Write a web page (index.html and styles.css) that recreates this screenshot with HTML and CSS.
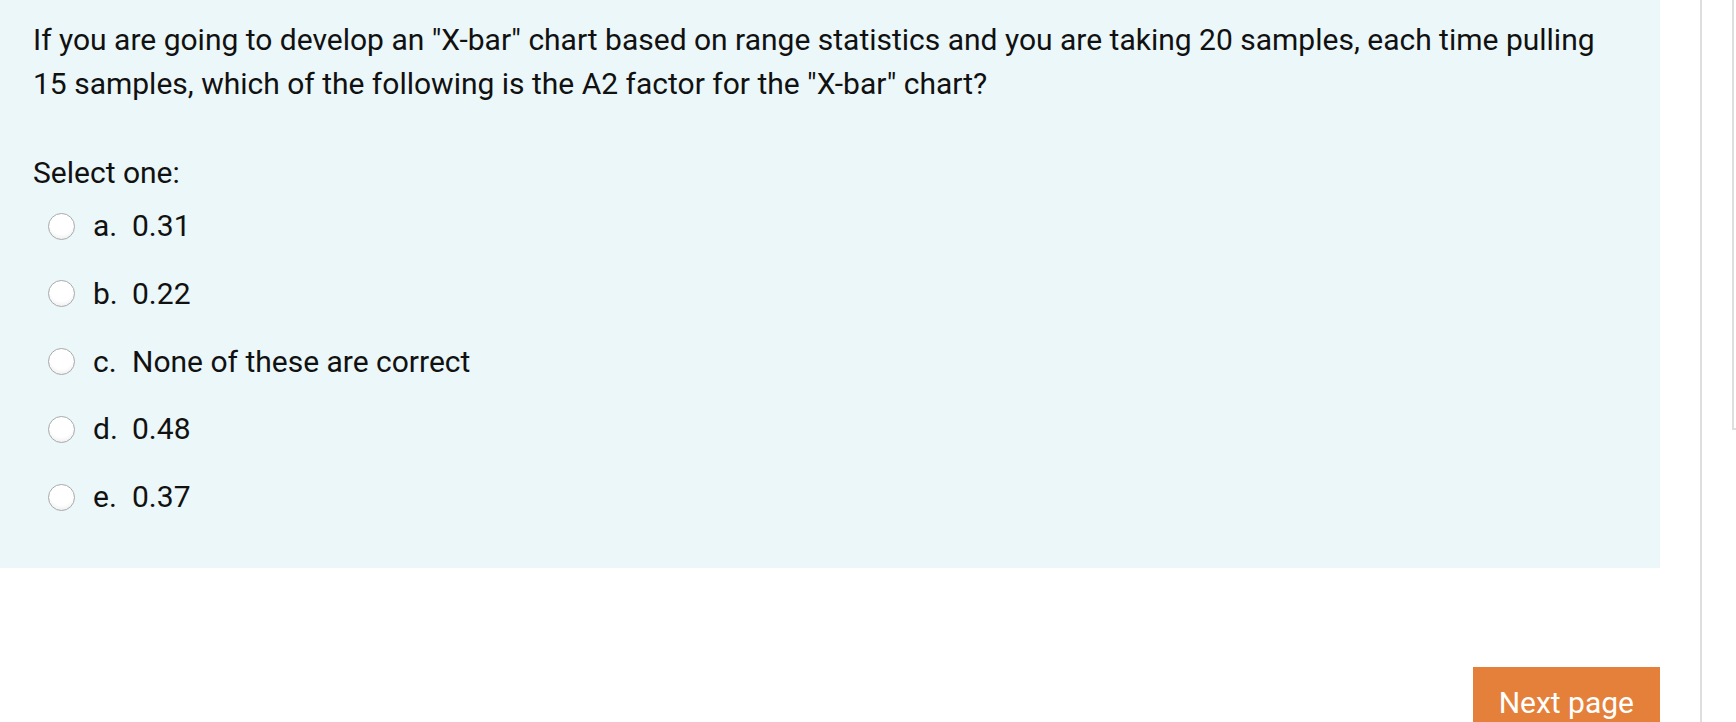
FILE: index.html
```html
<!DOCTYPE html>
<html>
<head>
<meta charset="utf-8">
<link rel="stylesheet" href="styles.css">
</head>
<body>
<div class="page">
  <div class="main">
    <div class="formulation">
      <div class="qtext">If you are going to develop an "X-bar" chart based on range statistics and you are taking 20 samples, each time pulling 15 samples, which of the following is the A2 factor for the "X-bar" chart?</div>
      <div class="prompt">Select one:</div>
      <div class="answers">
        <div class="option"><span class="radio"></span><span class="letter">a.</span><span>0.31</span></div>
        <div class="option"><span class="radio"></span><span class="letter">b.</span><span>0.22</span></div>
        <div class="option"><span class="radio"></span><span class="letter">c.</span><span>None of these are correct</span></div>
        <div class="option"><span class="radio"></span><span class="letter">d.</span><span>0.48</span></div>
        <div class="option"><span class="radio"></span><span class="letter">e.</span><span>0.37</span></div>
      </div>
    </div>
    <div class="nav">
      <button class="next">Next page</button>
    </div>
  </div>
  <div class="side">
    <div class="sidebox"></div>
  </div>
</div>
</body>
</html>
```

FILE: styles.css
```css
html, body {
  margin: 0;
  padding: 0;
  overflow: hidden;
  background: #ffffff;
}
body {
  font-family: Roboto, "Liberation Sans", sans-serif;
  color: #111111;
}
.page {
  display: flex;
  width: 1736px;
  height: 722px;
  overflow: hidden;
}
.main {
  width: 1660px;
  flex: none;
}
.formulation {
  background: #ebf7f9;
  padding: 18px 60px 0 33px;
  height: 568px;
  box-sizing: border-box;
}
.qtext {
  font-size: 30px;
  line-height: 44px;
}
.prompt {
  font-size: 30px;
  line-height: 44px;
  margin-top: 45px;
}
.answers {
  margin-top: 9px;
}
.option {
  display: flex;
  align-items: center;
  height: 44px;
  font-size: 30px;
  line-height: 44px;
  margin-bottom: 23.75px;
}
.radio {
  width: 27px;
  height: 27px;
  box-sizing: border-box;
  border-radius: 50%;
  border: 1px solid #aaaaaa;
  background: radial-gradient(circle at 50% 35%, #ffffff 55%, #e4e4e4 100%);
  margin-left: 15px;
  margin-right: 18px;
  flex: none;
}
.letter {
  width: 39px;
  flex: none;
}
.nav {
  display: flex;
  justify-content: flex-end;
  padding-top: 99px;
}
.next {
  background: #e5803b;
  color: #ffffff;
  border: none;
  font-family: Roboto, "Liberation Sans", sans-serif;
  font-size: 30px;
  line-height: 44px;
  padding: 14px 26px;
  min-width: 187px;
  white-space: nowrap;
  margin: 0;
}
.side {
  flex: none;
  width: 36px;
  margin-left: 40px;
  border-left: 2px solid #dedede;
  box-sizing: border-box;
  padding-left: 30px;
}
.sidebox {
  height: 430px;
  border-left: 2px solid #dedede;
  border-bottom: 2px solid #dedede;
  box-sizing: border-box;
}
```
